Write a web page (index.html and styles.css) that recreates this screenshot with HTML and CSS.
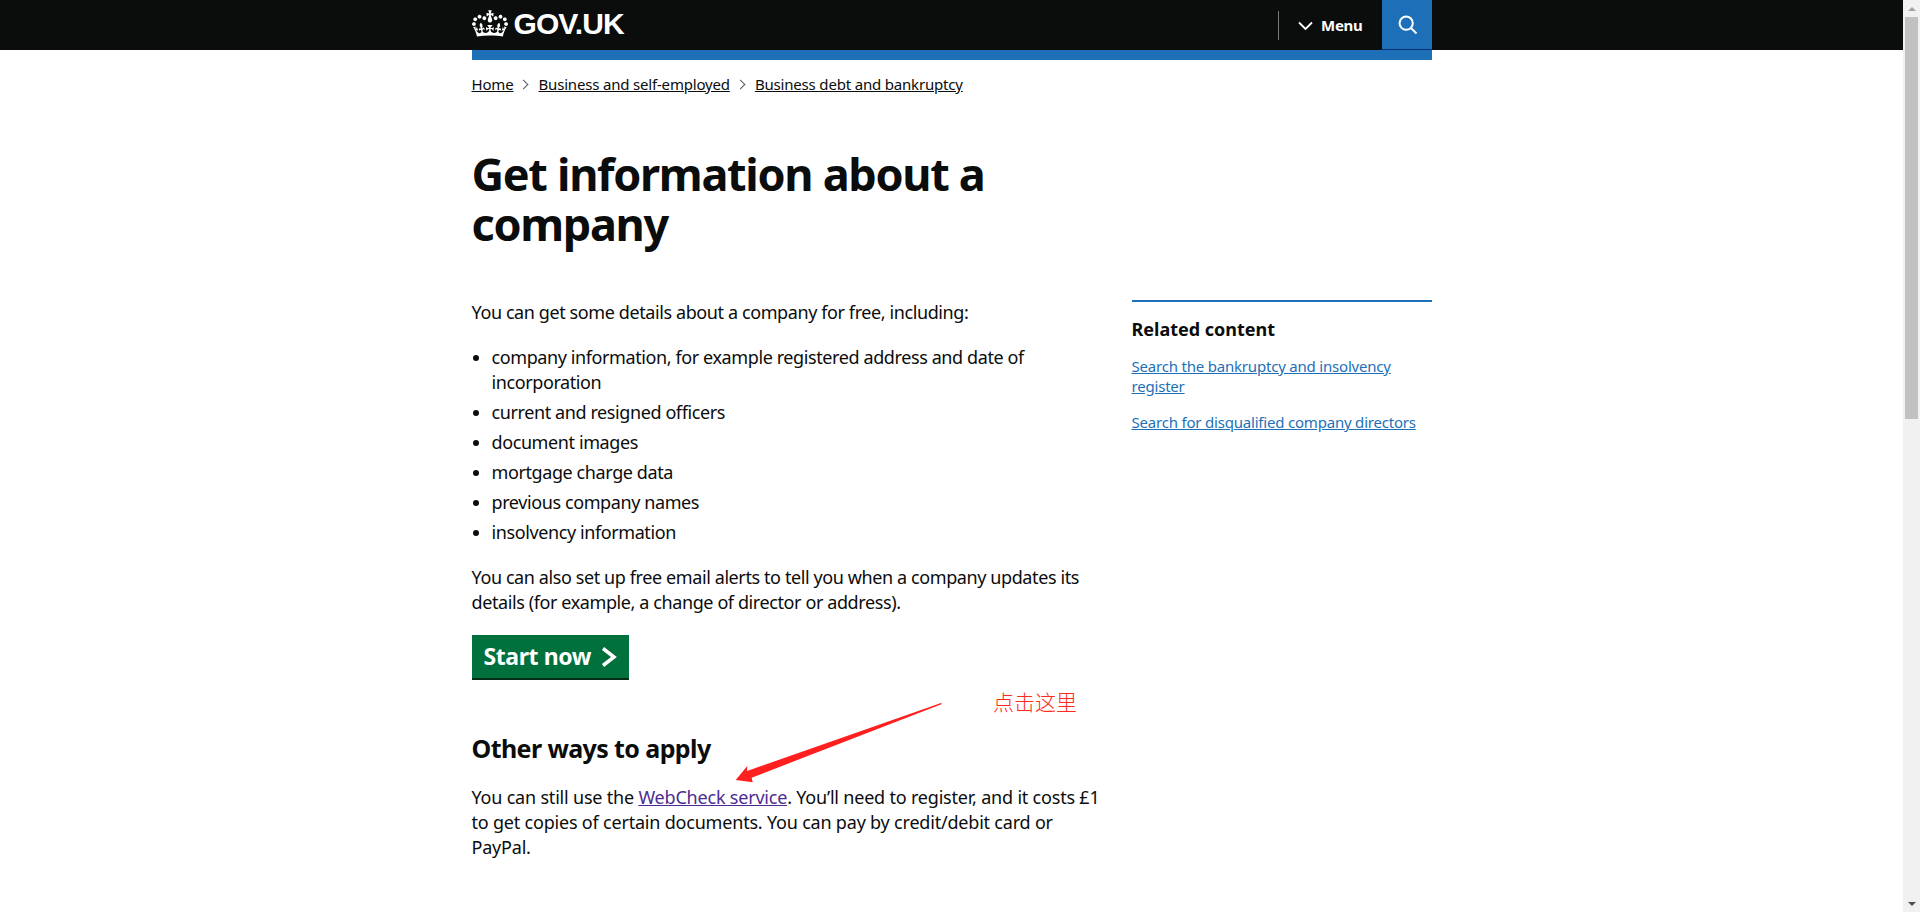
FILE: index.html
```html
<!DOCTYPE html>
<html lang="en">
<head>
  <meta charset="UTF-8" />
  <title>Get information about a company - GOV.UK</title>
  <link rel="stylesheet" href="styles.css">
</head>
<body>

  <div class="page">
    <header class="site-header">
      <div class="header-inner">
        <a class="logo" href="#">
          <svg class="crown" viewBox="0 0 132 97" aria-hidden="true">
            <path fill="currentColor" d="M25 30.2c3.5 1.5 7.7-.2 9.1-3.7 1.5-3.6-.2-7.8-3.9-9.2-3.6-1.4-7.6.3-9.1 3.9-1.4 3.5.3 7.5 3.9 9zM9 39.5c3.6 1.5 7.8-.2 9.2-3.7 1.5-3.6-.2-7.8-3.9-9.1-3.6-1.5-7.6.2-9.1 3.8-1.4 3.5.3 7.5 3.8 9zM4.4 57.2c3.5 1.5 7.7-.2 9.1-3.8 1.5-3.6-.2-7.7-3.9-9.1-3.5-1.5-7.6.3-9.1 3.8-1.4 3.5.3 7.6 3.9 9.1zm38.3-21.4c3.5 1.5 7.7-.2 9.1-3.8 1.5-3.6-.2-7.7-3.9-9.1-3.6-1.5-7.6.3-9.1 3.8-1.3 3.6.4 7.7 3.9 9.1zm64.4-5.6c-3.6 1.5-7.8-.2-9.1-3.7-1.5-3.6.2-7.8 3.8-9.2 3.6-1.4 7.7.3 9.2 3.9 1.3 3.5-.4 7.5-3.9 9zm15.9 9.3c-3.6 1.5-7.7-.2-9.1-3.7-1.5-3.6.2-7.8 3.7-9.1 3.6-1.5 7.7.2 9.2 3.8 1.5 3.5-.3 7.5-3.8 9zm4.7 17.7c-3.6 1.5-7.8-.2-9.2-3.8-1.5-3.6.2-7.7 3.9-9.1 3.6-1.5 7.7.3 9.2 3.8 1.3 3.5-.4 7.6-3.9 9.1zM89.3 35.8c-3.6 1.5-7.8-.2-9.2-3.8-1.4-3.6.2-7.7 3.9-9.1 3.6-1.5 7.7.3 9.2 3.8 1.4 3.6-.3 7.7-3.9 9.1zM69.7 17.7l8.9 4.7V9.3l-8.9 2.8c-.2-.3-.5-.6-.9-.9L72.4 0H59.6l3.5 11.2c-.3.3-.6.5-.9.9l-8.8-2.8v13.1l8.8-4.7c.3.3.6.7.9.9l-5 15.4v.1c-.2.8-.4 1.6-.4 2.4 0 4.1 3.1 7.5 7 8.1h.2c.3 0 .7.1 1 .1.4 0 .7 0 1-.1h.2c4-.6 7.1-4.1 7.1-8.1 0-.8-.1-1.7-.4-2.4V34l-5.1-15.4c.4-.2.7-.6 1-.9zM66 92.8c16.9 0 32.8 1.1 47.1 3.2 4-16.9 8.9-26.7 14-33.5l-9.6-3.4c1 4.9 1.1 7.2 0 10.2-1.5-1.4-3-4.3-4.2-8.7L108.6 76c2.8-2 5-3.2 7.5-3.3-4.4 9.4-10 11.9-13.6 11.2-4.3-.8-6.3-4.6-5.6-7.9 1-4.7 5.7-5.9 8-.5 4.3-8.7-3-11.4-7.6-8.8 7.1-7.2 7.9-13.5 2.1-21.1-8 6.1-8.1 12.3-4.5 20.8-4.7-5.4-12.1-2.5-9.5 6.2 3.4-5.2 7.9-2 7.2 3.1-.6 4.3-6.4 7.8-13.5 7.2-10.3-.9-10.9-8-11.2-13.8 2.5-.5 7.1 1.8 11 7.3L80.2 60c-4.1 4.4-8 5.3-12.3 5.4 1.4-4.4 8-11.6 8-11.6H55.5s6.4 7.2 7.9 11.6c-4.2-.1-8-1-12.3-5.4l1.4 16.4c3.9-5.5 8.5-7.7 10.9-7.3-.3 5.8-.9 12.8-11.1 13.8-7.2.6-12.9-2.9-13.5-7.2-.7-5 3.8-8.3 7.1-3.1 2.7-8.7-4.6-11.6-9.4-6.2 3.7-8.5 3.6-14.7-4.6-20.8-5.8 7.6-5 13.9 2.2 21.1-4.7-2.6-11.9.1-7.7 8.8 2.3-5.5 7.1-4.2 8.1.5.7 3.3-1.3 7.1-5.7 7.9-3.5.7-9-1.8-13.5-11.2 2.5.1 4.7 1.3 7.5 3.3l-4.7-15.4c-1.2 4.4-2.7 7.2-4.3 8.7-1.1-3-.9-5.3 0-10.2l-9.5 3.4c5 6.9 9.9 16.7 14 33.5 14.8-2.1 30.8-3.2 47.7-3.2z"/>
          </svg>
          <span class="logo-text">GOV.UK</span>
        </a>
        <div class="header-nav">
          <a class="menu-toggle" href="#">
            <svg class="menu-chevron" viewBox="0 0 15 10" aria-hidden="true">
              <polyline points="1,1.5 7.5,8 14,1.5" />
            </svg>
            Menu
          </a>
          <a class="search-toggle" href="#" aria-label="Search">
            <svg class="search-icon" viewBox="0 0 20 20" aria-hidden="true">
              <circle cx="8.2" cy="8.2" r="6.6" />
              <line x1="13" y1="13" x2="18.5" y2="18.5" />
            </svg>
          </a>
        </div>
      </div>
    </header>

    <div class="wrapper">
      <div class="blue-bar"></div>

      <nav class="breadcrumbs">
        <a href="#">Home</a>
        <span class="crumb-sep"></span>
        <a href="#">Business and self-employed</a>
        <span class="crumb-sep"></span>
        <a href="#">Business debt and bankruptcy</a>
      </nav>

      <h1>Get information about a company</h1>

      <div class="columns">
        <main class="main-col">
          <p>You can get some details about a company for free, including:</p>
          <ul>
            <li>company information, for example registered address and date of incorporation</li>
            <li>current and resigned officers</li>
            <li>document images</li>
            <li>mortgage charge data</li>
            <li>previous company names</li>
            <li>insolvency information</li>
          </ul>
          <p>You can also set up free email alerts to tell you when a company updates its details (for example, a change of director or address).</p>
          <a class="start-button" href="#">
            Start now
            <svg class="start-chevron" viewBox="0 0 16 20" aria-hidden="true">
              <polyline points="2,1.5 13,10 2,18.5" />
            </svg>
          </a>
          <h2>Other ways to apply</h2>
          <p class="other-ways">You can still use the <a class="visited" href="#">WebCheck service</a>. You’ll need to register, and it costs £1 to get copies of certain documents. You can pay by credit/debit card or PayPal.</p>
        </main>

        <aside class="related">
          <h3>Related content</h3>
          <ul class="related-list">
            <li><a href="#">Search the bankruptcy and insolvency register</a></li>
            <li><a href="#">Search for disqualified company directors</a></li>
          </ul>
        </aside>
      </div>
    </div>

    <!-- red note drawn on top of the screenshot -->
    <svg class="note-arrow" viewBox="0 0 220 90" aria-hidden="true">
      <polygon points="211,2 212,3 21.7,76.7 22.7,81.3 5.7,79 17.3,65 17,70" />
    </svg>
    <div class="note-text">点击这里</div>
  </div>

  <div class="scrollbar">
    <div class="arrow-up"></div>
    <div class="track"><div class="thumb"></div></div>
    <div class="arrow-down"></div>
  </div>

</body>
</html>
```

FILE: styles.css
```css
html, body {
  height: 100%;
}

body {
  margin: 0;
  display: flex;
  overflow: hidden;
  background: #fff;
  color: #0b0c0c;
  font-family: "Noto Sans", sans-serif;
  font-size: 18px;
  letter-spacing: -0.4px;
  line-height: 25px;
}

a {
  color: inherit;
}

.page {
  position: relative;
  flex: 1;
  min-width: 0;
  overflow: hidden;
}

/* header */

.site-header {
  height: 50px;
  background: #0b0c0c;
  color: #fff;
}

.header-inner {
  width: 960px;
  height: 50px;
  margin: 0 auto;
  display: flex;
  justify-content: space-between;
}

.logo {
  display: flex;
  align-items: center;
  color: #fff;
  text-decoration: none;
}

.crown {
  width: 36px;
  height: 27px;
  margin-right: 6px;
  margin-top: -3px;
}

.logo-text {
  font-family: "Liberation Sans", sans-serif;
  font-size: 30px;
  font-weight: bold;
  letter-spacing: -0.9px;
  line-height: 30px;
  margin-top: -2px;
}

.header-nav {
  display: flex;
}

.menu-toggle {
  display: flex;
  align-items: center;
  height: 29px;
  margin-top: 11px;
  padding: 0 19px 0 19px;
  border-left: 1px solid #777;
  color: #fff;
  text-decoration: none;
  font-size: 15px;
  font-weight: bold;
  letter-spacing: -0.3px;
}

.menu-chevron {
  width: 15px;
  height: 10px;
  margin-right: 8px;
  fill: none;
  stroke: #fff;
  stroke-width: 1.8;
}

.search-toggle {
  display: flex;
  align-items: center;
  justify-content: center;
  width: 50px;
  height: 49px;
  background: #1d70b8;
  border-bottom: 1px solid #003078;
}

.search-icon {
  width: 20px;
  height: 20px;
  margin-left: 2px;
  fill: none;
  stroke: #fff;
  stroke-width: 2;
}

/* page body */

.wrapper {
  width: 960px;
  margin: 0 auto;
}

.blue-bar {
  height: 10px;
  background: #1d70b8;
}

.breadcrumbs {
  display: flex;
  align-items: center;
  margin-top: 14px;
  font-size: 15px;
  letter-spacing: -0.18px;
  line-height: 20px;
}

.crumb-sep {
  width: 6px;
  height: 6px;
  margin: 0 11px 0 7px;
  border-top: 1px solid #505a5f;
  border-right: 1px solid #505a5f;
  transform: rotate(45deg);
}

h1 {
  width: 630px;
  margin: 55px 0 51px;
  font-size: 45px;
  font-weight: bold;
  letter-spacing: -1.3px;
  line-height: 50px;
}

.columns {
  display: flex;
  justify-content: space-between;
}

.main-col {
  width: 630px;
}

p {
  margin: 0 0 20px;
}

.main-col ul {
  margin: 0 0 20px;
  padding-left: 20px;
}

.main-col li {
  margin-bottom: 5px;
}

.main-col li:last-child {
  margin-bottom: 0;
}

.other-ways {
  letter-spacing: -0.2px;
}

.visited {
  color: #4c2c92;
}

.start-button {
  display: flex;
  align-items: center;
  justify-content: space-between;
  box-sizing: border-box;
  width: 157px;
  height: 43px;
  margin-bottom: 57px;
  padding: 0 12px;
  background: #00703c;
  box-shadow: 0 2px 0 #002d18;
  color: #fff;
  text-decoration: none;
  font-size: 23px;
  font-weight: bold;
  letter-spacing: -0.4px;
}

.start-chevron {
  width: 16px;
  height: 20px;
  fill: none;
  stroke: #fff;
  stroke-width: 3.5;
}

h2 {
  margin: -2px 0 22px;
  font-size: 25px;
  font-weight: bold;
  letter-spacing: -0.6px;
  line-height: 30px;
}

.related {
  box-sizing: border-box;
  width: 300px;
  padding-top: 15px;
  border-top: 2px solid #1d70b8;
}

h3 {
  margin: 0 0 14px;
  font-size: 18px;
  font-weight: bold;
  letter-spacing: 0;
  line-height: 25px;
}

.related-list {
  margin: 0;
  padding: 0;
  list-style: none;
  font-size: 15px;
  letter-spacing: -0.2px;
  line-height: 20px;
  color: #1d70b8;
}

.related-list li {
  margin-bottom: 16px;
}

/* annotation */

.note-arrow {
  position: absolute;
  left: 730px;
  top: 701px;
  width: 220px;
  height: 90px;
  fill: #ff1f1f;
}

.note-text {
  position: absolute;
  left: 993px;
  top: 686px;
  font-family: "Noto Sans CJK SC", sans-serif;
  font-size: 21px;
  font-weight: 300;
  letter-spacing: 0;
  line-height: 30px;
  color: #ff2a1a;
}

/* scrollbar */

.scrollbar {
  display: flex;
  flex-direction: column;
  width: 17px;
  background: #f1f1f1;
}

.arrow-up, .arrow-down {
  display: flex;
  align-items: center;
  justify-content: center;
  height: 17px;
}

.arrow-up::before {
  content: "";
  border-left: 4px solid transparent;
  border-right: 4px solid transparent;
  border-bottom: 4px solid #a3a3a3;
}

.arrow-down::before {
  content: "";
  border-left: 4px solid transparent;
  border-right: 4px solid transparent;
  border-top: 4px solid #505050;
}

.track {
  flex: 1;
  padding: 0 2px;
}

.thumb {
  height: 402px;
  background: #c1c1c1;
}
```
